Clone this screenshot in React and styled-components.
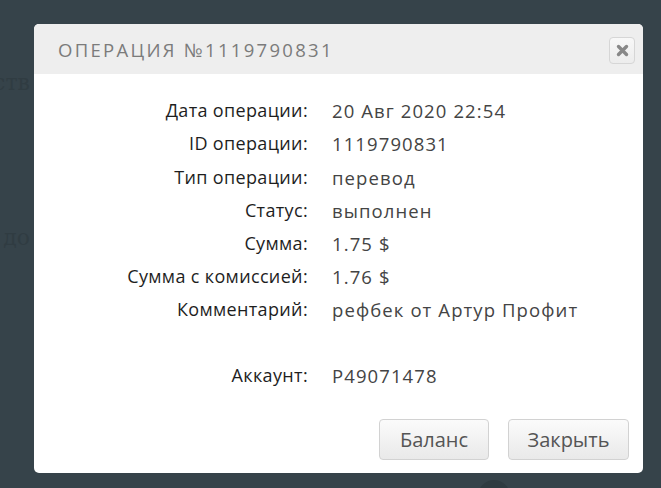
import React from "react"
import styled, { createGlobalStyle } from "styled-components"

const GlobalStyle = createGlobalStyle`
  html, body {
    margin: 0;
    padding: 0;
    background: #36434a;
    height: 100%;
    overflow: hidden;
  }
  * {
    box-sizing: border-box;
  }
`

const Page = styled.div`
  width: 661px;
  height: 488px;
  background: #36434a;
  position: relative;
  overflow: hidden;
  font-family: "Open Sans", "Liberation Sans", sans-serif;
`

const Backdrop = styled.div`
  width: 30px;
  display: flex;
  flex-direction: column;
  align-items: flex-end;
  padding-top: 70px;
  gap: 130px;
  overflow: hidden;
`

const GhostWord = styled.div`
  color: #303c42;
  font-size: 22px;
  font-family: "DejaVu Serif", serif;
  white-space: nowrap;
  flex-shrink: 0;
`

const Dot = styled.div`
  position: absolute;
  left: 478px;
  top: 480px;
  width: 32px;
  height: 32px;
  border-radius: 50%;
  background: #2f3b41;
`

const Modal = styled.div`
  position: absolute;
  left: 34px;
  top: 24px;
  width: 609px;
  height: 449px;
  background: #fff;
  border-radius: 5px;
  overflow: hidden;
  display: flex;
  flex-direction: column;
`

const Header = styled.div`
  height: 50px;
  background: #eeeeee;
  display: flex;
  align-items: center;
  justify-content: space-between;
  padding: 0 8px 0 24px;
  flex-shrink: 0;
`

const Title = styled.div`
  color: #7b7b7b;
  font-size: 18.5px;
  letter-spacing: 2.3px;
  font-weight: 400;
  text-transform: uppercase;
`

const CloseButton = styled.div`
  width: 26px;
  height: 27px;
  border: 1px solid #d6d6d6;
  border-radius: 4px;
  background: linear-gradient(#f8f8f8, #ececec);
  display: flex;
  align-items: center;
  justify-content: center;
  margin-top: 2px;
`

const Body = styled.div`
  flex: 1;
  padding: 20px 0 0;
`

const Row = styled.div`
  display: grid;
  grid-template-columns: 274px 1fr;
  column-gap: 24px;
  height: ${p => (p.$tall ? 66 : 33.2)}px;
  align-items: end;
  font-family: "Open Sans", sans-serif;
  font-size: 18px;
  line-height: 33px;
  white-space: nowrap;
`

const Label = styled.div`
  text-align: right;
  color: #1e1e1e;
  font-weight: 500;
  letter-spacing: 0.35px;
`

const Value = styled.div`
  color: #444;
  font-size: 18.5px;
  letter-spacing: 1.1px;
`

const Footer = styled.div`
  display: flex;
  justify-content: flex-end;
  gap: 19px;
  padding: 0 14px 13px 0;
`

const Button = styled.div`
  width: ${p => p.$w}px;
  height: 41px;
  border: 1px solid #d2d2d2;
  border-radius: 4px;
  background: linear-gradient(#fbfbfb, #e9e9e9);
  color: #555;
  font-size: 20px;
  display: flex;
  align-items: center;
  justify-content: center;
  font-family: "Open Sans", sans-serif;
`

const rows = [
  ["Дата операции:", "20 Авг 2020 22:54"],
  ["ID операции:", "1119790831"],
  ["Тип операции:", "перевод"],
  ["Статус:", "выполнен"],
  ["Сумма:", "1.75 $"],
  ["Сумма с комиссией:", "1.76 $"],
  ["Комментарий:", "рефбек от Артур Профит"],
]

export default function App() {
  return (
    <Page>
      <GlobalStyle />
      <Backdrop>
        <GhostWord>средств</GhostWord>
        <GhostWord>всего до</GhostWord>
      </Backdrop>
      <Dot />
      <Modal>
        <Header>
          <Title>Операция №1119790831</Title>
          <CloseButton>
            <svg width="13" height="13" viewBox="0 0 13 13">
              <path
                d="M2.5 2.5 L10.5 10.5 M10.5 2.5 L2.5 10.5"
                stroke="#888"
                strokeWidth="3.4"
                strokeLinecap="round"
              />
            </svg>
          </CloseButton>
        </Header>
        <Body>
          {rows.map(([label, value]) => (
            <Row key={label}>
              <Label>{label}</Label>
              <Value>{value}</Value>
            </Row>
          ))}
          <Row $tall>
            <Label>Аккаунт:</Label>
            <Value>P49071478</Value>
          </Row>
        </Body>
        <Footer>
          <Button $w={110}>Баланс</Button>
          <Button $w={121}>Закрыть</Button>
        </Footer>
      </Modal>
    </Page>
  )
}
